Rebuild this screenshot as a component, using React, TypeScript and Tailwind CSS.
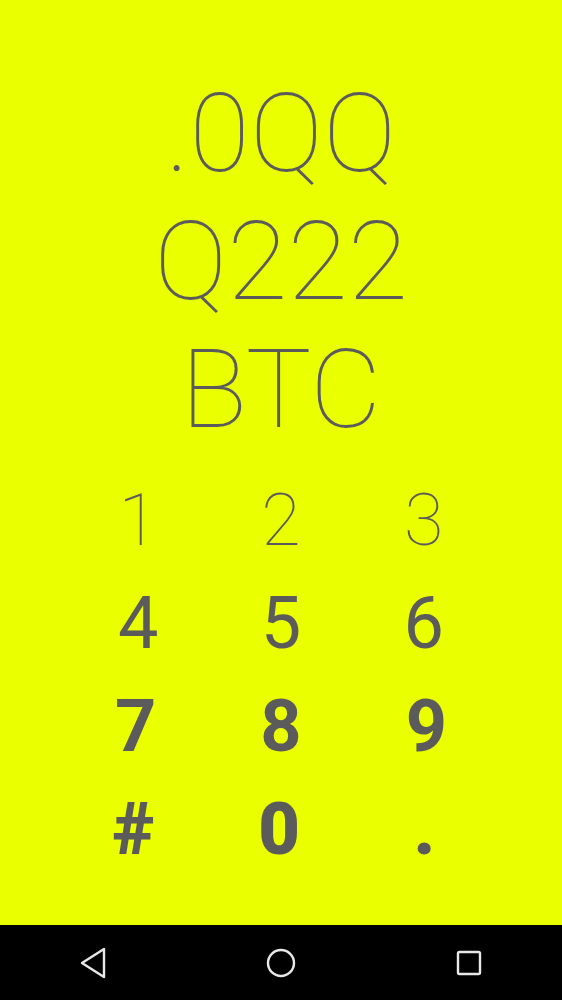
import React from 'react';

const rows = [
    { keys: ['1', '2', '3'], weight: 'font-thin', pad: 'px-[67px]' },
    { keys: ['4', '5', '6'], weight: 'font-normal', pad: 'px-[67px]' },
    { keys: ['7', '8', '9'], weight: 'font-bold', pad: 'px-[63px]' },
    { keys: ['#', '0', '.'], weight: 'font-black', pad: 'pl-[61px] pr-[65px]' },
];

const App = () => {
    return (
        <div className="w-full h-[1000px] flex flex-col bg-[#eaff00] font-['Roboto',sans-serif] text-[#5b5b5b]">
            <main className="flex-1 flex flex-col pt-[70px]">
                {/* Amount display */}
                <div className="flex flex-col items-center text-[110px] leading-[128px] font-thin">
                    <span>.0QQ</span>
                    <span>Q222</span>
                    <span>BTC</span>
                </div>

                {/* Keypad */}
                <div className="flex flex-col mt-[15px]">
                    {rows.map((row, i) => (
                        <div key={i} className={`grid grid-cols-3 ${row.pad}`}>
                            {row.keys.map((k) => (
                                <button
                                    key={k}
                                    className={`h-[103px] flex items-center justify-center text-[72px] leading-[103px] ${row.weight}`}
                                >
                                    {k}
                                </button>
                            ))}
                        </div>
                    ))}
                </div>
            </main>

            {/* Navigation bar */}
            <nav className="h-[75px] bg-black flex items-center justify-between px-[77px]">
                <svg width="32" height="32" viewBox="0 0 32 32" fill="none" stroke="#e8e8e8" strokeWidth="2.4" strokeLinejoin="round">
                    <path d="M27 2 L27 30 L5 16 Z" />
                </svg>
                <svg width="32" height="32" viewBox="0 0 32 32" fill="none" stroke="#e8e8e8" strokeWidth="2.4">
                    <circle cx="16" cy="16" r="13" />
                </svg>
                <svg width="32" height="32" viewBox="0 0 32 32" fill="none" stroke="#e8e8e8" strokeWidth="2.4">
                    <rect x="5" y="5" width="22" height="22" rx="1.5" />
                </svg>
            </nav>
        </div>
    );
};

export default App;
